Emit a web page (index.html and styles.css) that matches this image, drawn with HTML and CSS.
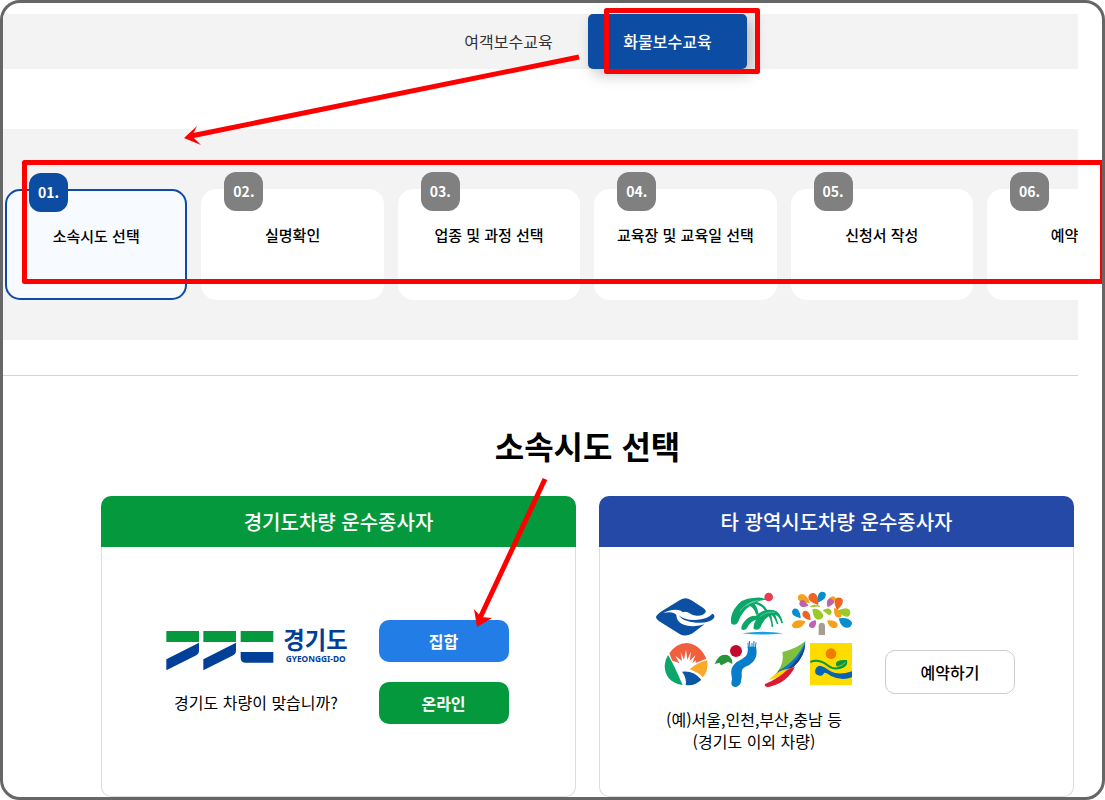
FILE: index.html
```html
<!DOCTYPE html>
<html lang="ko">
<head>
  <meta charset="UTF-8">
  <meta name="viewport" content="width=device-width, initial-scale=1">
  <title>화물보수교육 - 소속시도 선택</title>
  <link rel="stylesheet" href="styles.css">
</head>
<body>
  <div class="frame">

    <!-- tabs -->
    <nav class="tabs">
      <a href="#" class="tab">여객보수교육</a>
      <a href="#" class="tab active">화물보수교육</a>
    </nav>

    <!-- steps -->
    <ol class="steps">
      <li class="step on"><span class="num">01.</span>소속시도 선택</li>
      <li class="step"><span class="num">02.</span>실명확인</li>
      <li class="step"><span class="num">03.</span>업종 및 과정 선택</li>
      <li class="step"><span class="num">04.</span>교육장 및 교육일 선택</li>
      <li class="step"><span class="num">05.</span>신청서 작성</li>
      <li class="step"><span class="num">06.</span>예약확인</li>
    </ol>

    <main class="content">
      <h1>소속시도 선택</h1>
      <div class="cards">

        <section class="card">
          <h2 class="green">경기도차량 운수종사자</h2>
          <div class="card-body">
            <div class="info">
              <svg class="logo-gg" viewBox="45 92 543 126" role="img" aria-label="경기도">
                <path fill="#04993c" d="M46 95h98v33H46zM157 95h98v33h-98zM269 95h98v33h-98z"/>
                <path fill="#023f98" d="M46 180L144 130V154Q144 164 133 169L46 213Z"/>
                <path fill="#023f98" d="M157 180L255 130V154Q255 164 244 169L157 213ZM269 158H367V190H284Q269 190 269 175Z"/>
                <text class="logo-ko" x="397" y="150">경기도</text>
                <text class="logo-en" x="404" y="189">GYEONGGI-DO</text>
              </svg>
              <p>경기도 차량이 맞습니까?</p>
            </div>
            <div class="buttons">
              <button type="button" class="btn blue-btn">집합</button>
              <button type="button" class="btn green-btn">온라인</button>
            </div>
          </div>
        </section>

        <section class="card">
          <h2 class="blue">타 광역시도차량 운수종사자</h2>
          <div class="card-body">
            <div class="info">
              <svg class="logo-etc" viewBox="30 33 594 294" role="img" aria-label="광역시도 로고">
                <!-- diamond with wave -->
                <path fill="#0b50a2" d="M33 110Q36 104 50 94L105 60Q121 50 138 60L174 83Q184 90 182 96Q176 108 155 107Q142 107 128 97Q120 93 113 97Q108 89 92 89Q70 90 55 99Q85 93 94 105Q95 133 134 138Q160 140 178 133L143 160Q121 172 105 163L45 125Q33 118 33 110Z"/>
                <path fill="#0b50a2" d="M101 106Q118 121 151 120Q190 117 202 101Q211 105 207 114Q196 130 153 128Q113 126 101 106Z"/>
                <!-- mountains -->
                <circle cx="371" cy="51" r="13" fill="#ee3a50"/>
                <path fill="#0aa768" d="M259 131Q254 112 268 87Q288 54 325 54Q350 50 366 59Q346 60 336 66Q360 73 370 95L361 93Q351 76 328 71Q338 82 341 103L333 104Q329 86 315 78Q292 92 279 127Q272 139 259 131Z"/>
                <path fill="#0aa768" d="M289 148Q287 135 303 119Q315 106 333 107Q341 99 354 93Q370 86 387 91Q406 95 414 129L409 130Q404 109 391 104L400 132L396 133Q387 109 379 105L385 140L380 141Q378 118 371 109Q354 121 346 143Q338 154 326 146Q324 134 333 119Q315 124 306 144Q299 154 289 148Z"/>
                <path fill="none" stroke="#fff" d="M284 94Q305 66 340 61M304 77Q316 67 332 65M344 110Q364 94 390 97"/>
                <path fill="#18a0e0" d="M291 160Q352 151 415 160Q352 167 291 160Z"/>
                <!-- tree of drops -->
                <path fill="#a69d91" d="M521 165V139Q521 128 530 128Q540 128 540 139V165Z"/>
                <g stroke-width="4" stroke-linejoin="round">
                  <path fill="#f5a11a" stroke="#f5a11a" d="M443 135Q450 118 479 125Q470 143 453 143Q443 143 443 135ZM492 67Q465 66 461 57Q459 45 470 44Q485 46 492 67ZM547 72Q550 51 566 51Q575 56 566 63ZM549 123Q574 123 576 134Q575 144 565 142Q553 139 549 123ZM569 86Q590 95 588 107Q585 113 577 110Q568 104 569 86Z"/>
                  <path fill="#9bca28" stroke="#9bca28" d="M523 79Q509 73 498 80Q508 80 514 77ZM504 89Q521 86 533 105Q533 116 520 117Q507 117 504 89ZM536 91Q558 82 558 98Q556 105 550 102ZM583 92Q612 80 614 97Q613 109 604 108Q593 108 583 92Z"/>
                  <path fill="#068fcf" stroke="#068fcf" d="M520 65Q518 39 530 37Q543 37 540 48Q539 57 520 65ZM465 112Q442 107 443 95Q446 85 454 88Q463 92 465 112ZM584 117Q610 113 619 128Q618 142 603 141Q589 138 584 117Z"/>
                  <path fill="#f06321" stroke="#f06321" d="M518 72Q490 63 492 50Q496 40 506 41Q519 46 518 72ZM495 118Q473 114 474 100Q476 93 484 95Q494 99 495 118ZM577 87Q568 69 572 59Q579 51 590 58Q597 68 577 87Z"/>
                  <path fill="#bd62b1" stroke="#bd62b1" d="M488 76Q469 84 465 72Q465 59 476 63ZM549 79Q544 57 558 58Q567 63 565 68Q561 74 549 79ZM511 123Q512 141 503 142Q492 141 494 134Q497 125 511 123Z"/>
                </g>
                <!-- sunrise circle -->
                <path fill="#f1603e" d="M73 220Q93 190 125 189Q165 193 184 236L152 249L153 241L142 249L151 226L134 243L138 215L127 239L123 209L117 239L107 216L111 243L91 227L103 249L82 242Q76 229 73 220Z"/>
                <path fill="#0aa66c" d="M69 225Q86 252 113 315Q60 306 59 257Q60 239 69 225Z"/>
                <path fill="#faa928" d="M134 268Q157 247 187 241Q191 272 174 292Q160 277 134 268Z"/>
                <path fill="#0d55a5" d="M111 275Q145 270 169 299Q147 320 122 315Q126 294 111 275Z"/>
                <!-- dancer -->
                <circle cx="273" cy="213" r="18" fill="#c4072d"/>
                <path fill="#27943b" d="M209 252Q222 219 247 225Q263 233 262 252L249 245L235 253Q225 259 224 248Z"/>
                <path fill="#087dca" d="M259 309Q263 297 259 282Q256 262 274 247Q292 238 303 228Q310 219 308 200L333 200Q339 226 326 244Q315 256 300 261Q290 267 290 277Q292 290 287 309Q281 321 270 321Q259 320 259 309Z"/>
                <path fill="none" stroke="#087dca" stroke-width="3" d="M310 204L309 188M315 204L313 183M321 204L321 189M326 204L327 183M331 204L333 187"/>
                <!-- kite sail -->
                <path fill="#80bf40" d="M481 183Q458 205 412 216Q419 247 397 276Q453 252 481 183Z"/>
                <path fill="#087ac5" d="M481 183Q455 244 402 271L389 285Q428 276 447 260Q481 230 481 183Z"/>
                <path fill="#203d83" d="M481 191Q466 235 426 269L447 259Q480 226 481 191Z"/>
                <path fill="#ffd100" d="M426 267Q396 272 371 301Q423 286 446 264Z"/>
                <path fill="#dc1b32" d="M450 261Q438 264 426 270Q404 293 359 313Q360 324 374 320Q425 309 450 261Z"/>
                <!-- yellow square -->
                <path fill="#ffdc00" d="M495 189H621V315H495Z"/>
                <circle cx="558" cy="221" r="16" fill="#f17d00"/>
                <path fill="none" stroke="#05993f" stroke-width="6" d="M496 246Q520 236 545 254Q568 273 594 260"/>
                <path fill="#05993f" d="M573 256Q568 238 606 240Q610 259 592 264Q579 268 573 256Z"/>
                <path fill="none" stroke="#ffdc00" stroke-width="2" d="M577 260Q592 258 601 247"/>
                <path fill="#0864b3" d="M510 273Q512 258 526 257Q540 260 552 271Q579 289 621 274V292Q590 304 558 288Q546 278 537 278Q535 288 524 287Q510 285 510 273Z"/>
              </svg>
              <p>(예)서울,인천,부산,충남 등<br>(경기도 이외 차량)</p>
            </div>
            <div class="buttons">
              <button type="button" class="btn line-btn">예약하기</button>
            </div>
          </div>
        </section>

      </div>
    </main>

    <!-- guide marks over the page -->
    <svg class="marks" viewBox="3 3 1099 794" width="1099" height="794" aria-hidden="true">
      <g fill="none" stroke="#f00" stroke-width="5" stroke-linejoin="round">
        <rect x="606.5" y="10.5" width="151" height="61"/>
        <rect x="24.5" y="162.5" width="1078" height="119"/>
        <path d="M579 57L191 136M545 479L480 618"/>
      </g>
      <path fill="#f00" d="M184 138L197 126L192 136L201 145ZM477 627L474 609L481 617L492 618Z"/>
    </svg>
  </div>
</body>
</html>
```

FILE: styles.css
```css
* {
  box-sizing: border-box;
  margin: 0;
  padding: 0;
}
body {
  font-family: "Noto Sans CJK KR", "Noto Sans", sans-serif;
  font-size: 16px;
  line-height: 22px;
  color: #000;
  background: #fff;
}
.frame {
  position: relative;
  overflow: hidden;
  min-height: 100vh;
  padding-top: 11px;
  border: 3px solid #666;
  border-radius: 20px;
}

/* tabs */
.tabs {
  display: flex;
  justify-content: center;
  margin-right: 24px;
  padding-left: 95px;
  background: #f3f3f3;
}
.tab {
  width: 159px;
  line-height: 55px;
  text-align: center;
  text-decoration: none;
  color: #333;
}
.tab.active {
  border-radius: 5px;
  background: #0d4ca3;
  color: #fff;
  font-weight: 500;
  box-shadow: 5px 5px 15px rgba(0, 0, 0, 0.25);
}

/* steps */
.steps {
  display: flex;
  gap: 14px;
  overflow: hidden;
  margin: 60px 24px 35px 0;
  padding: 60px 0 40px 2px;
  list-style: none;
  background: #f3f3f3;
}
.step {
  position: relative;
  flex: 0 0 17%;
  height: 111px;
  padding-top: 34px;
  border: 1px solid #fff;
  border-radius: 15px;
  background: #fff;
  text-align: center;
  white-space: nowrap;
  font-size: 15px;
  font-weight: 500;
}
.step.on {
  border: 2px solid #0d4ca3;
  background: #f7faff;
}
.num {
  position: absolute;
  top: -18px;
  left: 22px;
  width: 39px;
  line-height: 39px;
  border-radius: 12px;
  background: #808080;
  color: #fff;
  font-size: 14px;
  font-weight: 700;
}
.step.on .num {
  background: #0d4ca3;
}

/* content */
.content {
  margin-right: 24px;
  padding: 46px 4px 0 98px;
  border-top: 1px solid #d5d5d5;
}
h1 {
  margin-bottom: 28px;
  font-size: 32px;
  line-height: 46px;
  text-align: center;
}
.cards {
  display: flex;
  gap: 23px;
}
.card {
  flex: 1;
}
.card h2 {
  border-radius: 10px 10px 0 0;
  color: #fff;
  font-size: 20px;
  font-weight: 500;
  line-height: 51px;
  text-align: center;
}
.green {
  background: #04993c;
}
.blue {
  background: #2449a6;
}
.card-body {
  display: flex;
  justify-content: center;
  align-items: center;
  gap: 32px;
  height: 250px;
  padding-right: 3px;
  border: 1px solid #ddd;
  border-top: 0;
  border-radius: 0 0 10px 10px;
}
.info {
  display: flex;
  flex-direction: column;
  align-items: center;
  gap: 19px;
  text-align: center;
}
.logo-gg {
  overflow: visible;
  width: 181px;
  height: 42px;
}
.logo-ko {
  fill: #023f98;
  font-size: 70px;
  font-weight: 700;
}
.logo-en {
  fill: #023f98;
  font-family: "Noto Sans", sans-serif;
  font-size: 25px;
  font-weight: 700;
}
.logo-etc {
  width: 198px;
  height: 98px;
}
.buttons {
  display: flex;
  flex-direction: column;
  gap: 20px;
}
.btn {
  width: 130px;
  height: 42px;
  border: 0;
  border-radius: 10px;
  color: #fff;
  font-family: inherit;
  font-size: 16px;
  font-weight: 700;
  cursor: pointer;
}
.blue-btn {
  background: #237de6;
}
.green-btn {
  background: #04993c;
}
.line-btn {
  height: 44px;
  border: 1px solid #ccc;
  background: #fff;
  color: #000;
  font-weight: 500;
}

/* guide marks */
.marks {
  position: absolute;
  top: 0;
  left: 0;
  pointer-events: none;
}
```
